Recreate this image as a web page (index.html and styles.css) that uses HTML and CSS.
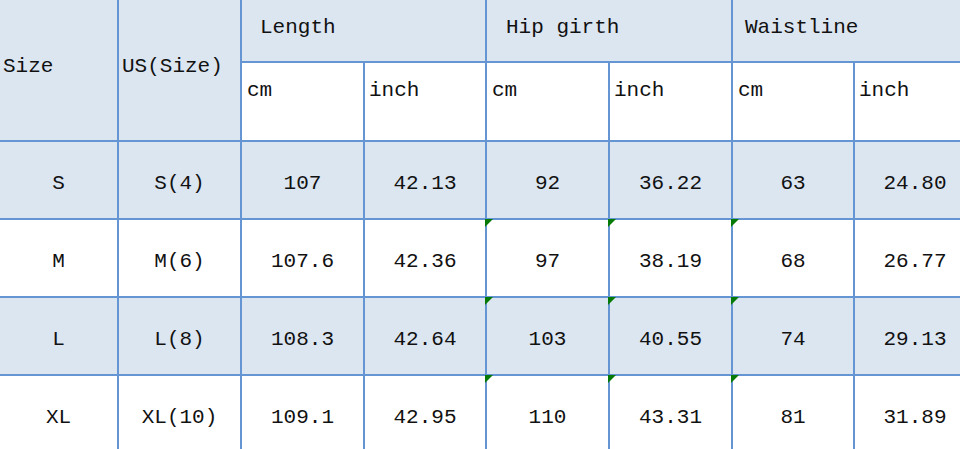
FILE: index.html
```html
<!DOCTYPE html>
<html>
<head>
<meta charset="utf-8">
<link rel="stylesheet" href="styles.css">
</head>
<body>
<div class="sheet">
  <div class="c blue size-h">Size</div>
  <div class="c blue us-h">US(Size)</div>
  <div class="c blue grp g-len">Length</div>
  <div class="c blue grp g-hip">Hip girth</div>
  <div class="c blue grp g-waist">Waistline</div>
  <div class="c unit u-cm">cm</div>
  <div class="c unit">inch</div>
  <div class="c unit u-cm">cm</div>
  <div class="c unit">inch</div>
  <div class="c unit u-cm">cm</div>
  <div class="c unit">inch</div>

  <div class="c blue v">S</div>
  <div class="c blue v">S(4)</div>
  <div class="c blue v">107</div>
  <div class="c blue v">42.13</div>
  <div class="c blue v">92</div>
  <div class="c blue v">36.22</div>
  <div class="c blue v">63</div>
  <div class="c blue v">24.80</div>

  <div class="c v">M</div>
  <div class="c v">M(6)</div>
  <div class="c v">107.6</div>
  <div class="c v">42.36</div>
  <div class="c v flag">97</div>
  <div class="c v flag">38.19</div>
  <div class="c v flag">68</div>
  <div class="c v">26.77</div>

  <div class="c blue v">L</div>
  <div class="c blue v">L(8)</div>
  <div class="c blue v">108.3</div>
  <div class="c blue v">42.64</div>
  <div class="c blue v flag">103</div>
  <div class="c blue v flag">40.55</div>
  <div class="c blue v flag">74</div>
  <div class="c blue v">29.13</div>

  <div class="c v">XL</div>
  <div class="c v">XL(10)</div>
  <div class="c v">109.1</div>
  <div class="c v">42.95</div>
  <div class="c v flag">110</div>
  <div class="c v flag">43.31</div>
  <div class="c v flag">81</div>
  <div class="c v">31.89</div>
</div>
</body>
</html>
```
FILE: styles.css
```css
html, body {
  margin: 0;
  padding: 0;
  background: #ffffff;
  overflow: hidden;
  width: 960px;
  height: 449px;
}
.sheet {
  display: grid;
  grid-template-columns: 117px 121px 121px 120px 121px 121px 120px 120px;
  grid-template-rows: 71px 77px 76px 76px 76px 76px;
  gap: 2px;
  background: #6695d3;
  width: 975px;
  margin-top: -10px;
  font-family: "Liberation Mono", "DejaVu Sans Mono", monospace;
  font-size: 21px;
  color: #111111;
}
.c {
  background: #ffffff;
  display: flex;
  align-items: center;
  position: relative;
  white-space: pre;
}
.blue {
  background: #dce6f1;
}
.size-h {
  grid-row: 1 / 3;
  grid-column: 1;
  padding-left: 3px;
  padding-top: 2px;
}
.us-h {
  grid-row: 1 / 3;
  grid-column: 2;
  padding-left: 3px;
  padding-top: 2px;
}
.grp {
  grid-row: 1;
  padding-top: 4px;
}
.g-len {
  grid-column: 3 / 5;
  padding-left: 18px;
}
.g-hip {
  grid-column: 5 / 7;
  padding-left: 19px;
}
.g-waist {
  grid-column: 7 / 9;
  padding-left: 12px;
}
.unit {
  align-items: flex-start;
  padding-top: 16px;
  padding-left: 4px;
}
.u-cm {
  padding-left: 5px;
}
.v {
  justify-content: center;
  padding-top: 7px;
}
.flag::before {
  content: "";
  position: absolute;
  left: -2px;
  top: -1px;
  width: 0;
  height: 0;
  border-top: 8px solid #067a06;
  border-right: 8px solid transparent;
}
```
